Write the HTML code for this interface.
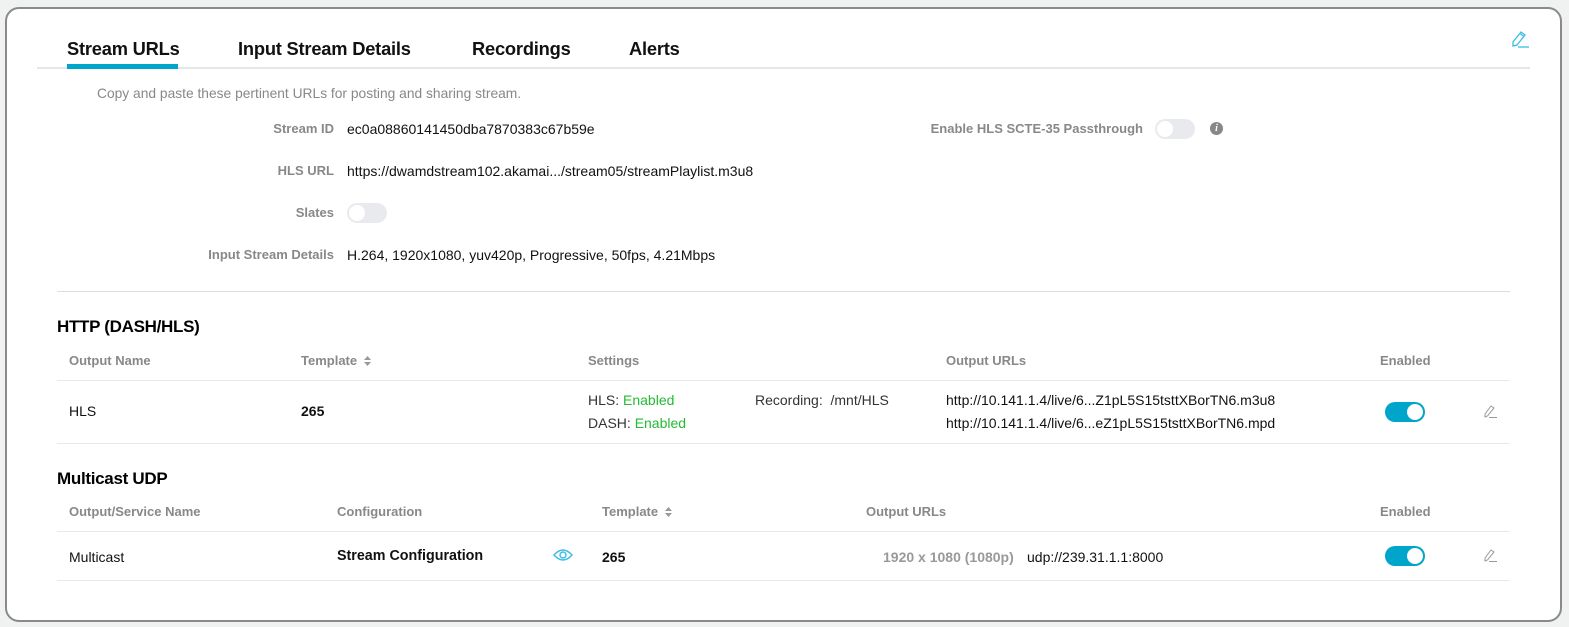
<!DOCTYPE html><html><head><style>
body{margin:0;width:1569px;height:627px;background:#f0f1f1;font-family:"Liberation Sans",sans-serif;overflow:hidden;position:relative}
.card{position:absolute;left:5px;top:7px;width:1553px;height:611px;background:#fff;border:2px solid #8a8a8a;border-radius:14px}
.t{position:absolute;white-space:nowrap;line-height:20px;font-size:14px;color:#111}
.tab{font-size:18.3px;font-weight:bold;color:#111;letter-spacing:-0.2px}
.lbl{font-weight:bold;color:#888;font-size:13px;text-align:right}
.h{font-weight:bold;color:#888;font-size:13px}
.hd{font-size:17px;font-weight:bold;color:#000;letter-spacing:-0.3px}
.b{font-weight:bold}
.g{color:#22bb33}
.line{position:absolute;height:1px;background:#e8e9ee}
.tg{position:absolute;width:40px;height:20px;border-radius:10px;background:#e9eaee}
.tg::after{content:"";position:absolute;left:2px;top:2px;width:16px;height:16px;border-radius:50%;background:#fff}
.tg.on{background:#00a5cc}
.tg.on::after{left:22px}
.sort{display:inline-block;margin-left:6px;vertical-align:middle;position:relative;top:-1px}
</style></head><body>
<div class="card"></div>
<div class="t tab" style="left:67px;top:39px">Stream URLs</div>
<div class="t tab" style="left:238px;top:39px">Input Stream Details</div>
<div class="t tab" style="left:472px;top:39px">Recordings</div>
<div class="t tab" style="left:629px;top:39px">Alerts</div>
<div class="line" style="left:37px;top:67px;width:1493px;height:2px;background:#e4e6ec"></div>
<div style="position:absolute;left:67px;top:64px;width:111px;height:5px;background:#00a5cc"></div>
<svg style="position:absolute;left:1510px;top:29px" width="20" height="20" viewBox="0 0 20 20" fill="none" stroke="#3bbde6" stroke-width="1.3"><path d="M3 17 L3 13 L11 3 L15 6 L7 16 Z M10 4.5 L14 7.5"/><path d="M8 18 H19"/></svg>

<div class="t" style="left:97px;top:84px;color:#888;font-size:13.8px">Copy and paste these pertinent URLs for posting and sharing stream.</div>
<div class="t lbl" style="right:1235px;top:119px">Stream ID</div>
<div class="t" style="left:347px;top:119px">ec0a08860141450dba7870383c67b59e</div>
<div class="t lbl" style="right:1235px;top:161px">HLS URL</div>
<div class="t" style="left:347px;top:161px">https://dwamdstream102.akamai.../stream05/streamPlaylist.m3u8</div>
<div class="t lbl" style="right:1235px;top:203px">Slates</div>
<div class="tg" style="left:347px;top:203px"></div>
<div class="t lbl" style="right:1235px;top:245px">Input Stream Details</div>
<div class="t" style="left:347px;top:245px">H.264, 1920x1080, yuv420p, Progressive, 50fps, 4.21Mbps</div>
<div class="t lbl" style="right:426px;top:119px">Enable HLS SCTE-35 Passthrough</div>
<div class="tg" style="left:1155px;top:119px"></div>
<div style="position:absolute;left:1210px;top:122px;width:13px;height:13px;border-radius:50%;background:#888;color:#fff;font-size:10px;font-weight:bold;font-style:italic;text-align:center;line-height:13px;font-family:'Liberation Serif',serif">i</div>

<div class="line" style="left:57px;top:291px;width:1453px;background:#dcdde2"></div>
<div class="t hd" style="left:57px;top:317px">HTTP (DASH/HLS)</div>
<div class="t h" style="left:69px;top:351px">Output Name</div>
<div class="t h" style="left:301px;top:351px">Template<svg class="sort" width="9" height="12" viewBox="0 0 9 12" fill="#999"><path d="M1 5 L4.5 1 L8 5Z M1 7 L4.5 11 L8 7Z"/></svg></div>
<div class="t h" style="left:588px;top:351px">Settings</div>
<div class="t h" style="left:946px;top:351px">Output URLs</div>
<div class="t h" style="left:1380px;top:351px">Enabled</div>
<div class="line" style="left:57px;top:380px;width:1453px"></div>
<div class="t" style="left:69px;top:401px">HLS</div>
<div class="t b" style="left:301px;top:401px">265</div>
<div class="t" style="left:588px;top:390px;color:#333">HLS: <span class="g">Enabled</span></div>
<div class="t" style="left:588px;top:413px;color:#333">DASH: <span class="g">Enabled</span></div>
<div class="t" style="left:755px;top:390px;color:#333">Recording: &nbsp;/mnt/HLS</div>
<div class="t" style="left:946px;top:390px">http://10.141.1.4/live/6...Z1pL5S15tsttXBorTN6.m3u8</div>
<div class="t" style="left:946px;top:413px">http://10.141.1.4/live/6...eZ1pL5S15tsttXBorTN6.mpd</div>
<div class="tg on" style="left:1385px;top:402px"></div>
<svg style="position:absolute;left:1483px;top:403px" width="16" height="16" viewBox="0 0 16 16" fill="none" stroke="#999" stroke-width="1"><path d="M2 14 L2 11 L8 3 L11 5 L4.5 13 Z"/><path d="M6 14.5 H14"/></svg>
<div class="line" style="left:57px;top:443px;width:1453px"></div>

<div class="t hd" style="left:57px;top:469px">Multicast UDP</div>
<div class="t h" style="left:69px;top:502px">Output/Service Name</div>
<div class="t h" style="left:337px;top:502px">Configuration</div>
<div class="t h" style="left:602px;top:502px">Template<svg class="sort" width="9" height="12" viewBox="0 0 9 12" fill="#999"><path d="M1 5 L4.5 1 L8 5Z M1 7 L4.5 11 L8 7Z"/></svg></div>
<div class="t h" style="left:866px;top:502px">Output URLs</div>
<div class="t h" style="left:1380px;top:502px">Enabled</div>
<div class="line" style="left:57px;top:531px;width:1453px"></div>
<div class="t" style="left:69px;top:547px">Multicast</div>
<div class="t b" style="left:337px;top:546px;font-size:14.3px">Stream Configuration</div>
<svg style="position:absolute;left:553px;top:548px" width="20" height="14" viewBox="0 0 20 14" fill="none" stroke="#3bbde6" stroke-width="1.4"><path d="M1 7 Q10 -3 19 7 Q10 17 1 7Z"/><circle cx="10" cy="7" r="3"/></svg>
<div class="t b" style="left:602px;top:547px">265</div>
<div class="t b" style="left:883px;top:547px;color:#999">1920 x 1080 (1080p)</div>
<div class="t" style="left:1027px;top:547px">udp://239.31.1.1:8000</div>
<div class="tg on" style="left:1385px;top:546px"></div>
<svg style="position:absolute;left:1483px;top:547px" width="16" height="16" viewBox="0 0 16 16" fill="none" stroke="#999" stroke-width="1"><path d="M2 14 L2 11 L8 3 L11 5 L4.5 13 Z"/><path d="M6 14.5 H14"/></svg>
<div class="line" style="left:57px;top:580px;width:1453px"></div>
</body></html>
